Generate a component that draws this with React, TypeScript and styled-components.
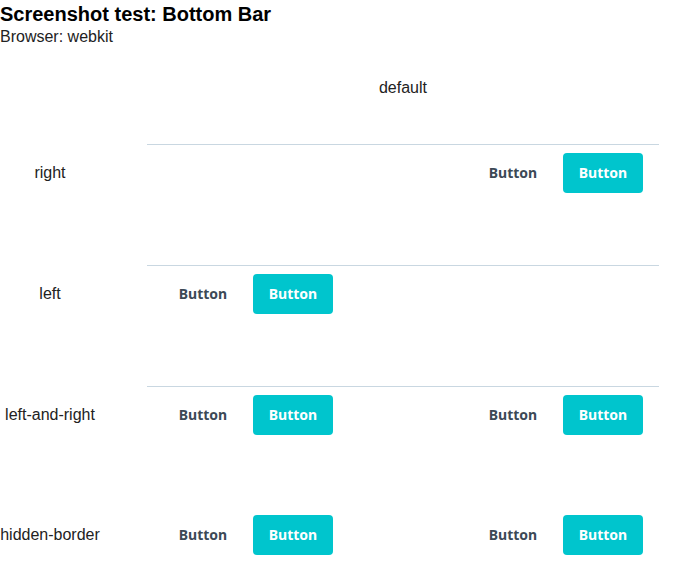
import React from "react";
import styled, { createGlobalStyle } from "styled-components";

const GlobalStyle = createGlobalStyle`
  html, body { margin: 0; padding: 0; background: #ffffff; }
  body { font-family: "Liberation Sans", Arial, sans-serif; color: #000; }
`;

const Page = styled.div`
  display: flex;
  flex-direction: column;
`;

const Title = styled.h1`
  margin: 0;
  font-size: 20px;
  line-height: 28px;
  font-weight: 700;
  color: #000;
`;

const Subtitle = styled.div`
  font-size: 16px;
  line-height: 18px;
  color: #222;
`;

const Grid = styled.div`
  display: grid;
  grid-template-columns: 100px 512px;
  column-gap: 47px;
  margin-top: 14px;
`;

const ColHeader = styled.div`
  grid-column: 2;
  text-align: center;
  font-size: 16px;
  line-height: 18px;
  color: #222;
  padding: 19px 0 15px;
`;

const Label = styled.div`
  display: flex;
  align-items: center;
  justify-content: center;
  font-size: 16px;
  color: #222;
  white-space: nowrap;
`;

const Cell = styled.div`
  padding: 32px 0;
`;

const Bar = styled.div<{ $border: boolean }>`
  display: flex;
  align-items: center;
  justify-content: space-between;
  padding: 8px 16px;
  border-top: ${(p) => (p.$border ? "1px solid #c9d7e1" : "none")};
  height: 40px;
`;

const Group = styled.div`
  display: flex;
  gap: 10px;
`;

const Spacer = styled.div`
  flex: 1;
`;

const Btn = styled.button<{ $primary?: boolean }>`
  width: 80px;
  height: 40px;
  border: none;
  border-radius: 4px;
  font-family: "Noto Sans", "Open Sans", sans-serif;
  font-weight: 700;
  font-size: 14px;
  line-height: 20px;
  padding: 0 0 1px;
  cursor: pointer;
  background: ${(p) => (p.$primary ? "#00c5cd" : "transparent")};
  color: ${(p) => (p.$primary ? "#ffffff" : "#3c4956")};
`;

const Buttons = () => (
  <Group>
    <Btn>Button</Btn>
    <Btn $primary>Button</Btn>
  </Group>
);

type Variant = { name: string; left: boolean; right: boolean; border: boolean };

const variants: Variant[] = [
  { name: "right", left: false, right: true, border: true },
  { name: "left", left: true, right: false, border: true },
  { name: "left-and-right", left: true, right: true, border: true },
  { name: "hidden-border", left: true, right: true, border: false },
];

export default function App() {
  return (
    <>
      <GlobalStyle />
      <Page>
        <Title>Screenshot test: Bottom Bar</Title>
        <Subtitle>Browser: webkit</Subtitle>
        <Grid>
          <ColHeader>default</ColHeader>
          {variants.map((v) => (
            <React.Fragment key={v.name}>
              <Label>{v.name}</Label>
              <Cell>
                <Bar $border={v.border}>
                  {v.left ? <Buttons /> : <Spacer />}
                  {v.right ? <Buttons /> : <Spacer />}
                </Bar>
              </Cell>
            </React.Fragment>
          ))}
        </Grid>
      </Page>
    </>
  );
}
